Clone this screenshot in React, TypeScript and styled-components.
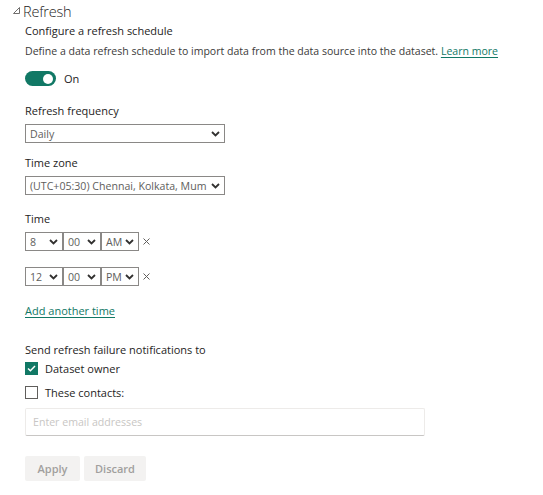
import React from 'react'
import styled, { createGlobalStyle } from 'styled-components'

const GlobalStyle = createGlobalStyle`
  html, body {
    margin: 0;
    padding: 0;
    background: #ffffff;
  }
  body {
    font-family: 'Open Sans', 'Liberation Sans', sans-serif;
    color: #252423;
  }
`

const Page = styled.div`
  padding: 0 0 0 25px;
  width: 518px;
  height: 495px;
  box-sizing: border-box;
`

const Header = styled.div`
  display: flex;
  align-items: center;
  height: 22px;
  margin-left: -12px;
`

const Caret = styled.svg`
  width: 7px;
  height: 7px;
  margin-right: 3px;
  margin-top: -2px;
`

const Title = styled.span`
  font-size: 14.5px;
  font-weight: 300;
  color: #252423;
  letter-spacing: -0.2px;
`

const Block = styled.div<{ $top: number }>`
  margin-top: ${(p) => p.$top}px;
`

const Heading = styled.div`
  font-size: 11px;
  line-height: 14px;
  color: #252423;
`

const Description = styled.div`
  font-size: 10.55px;
  line-height: 14px;
  color: #3b3a39;
  white-space: nowrap;
`

const Link = styled.a`
  color: #117865;
  text-decoration: underline;
  text-underline-offset: 2px;
  cursor: pointer;
`

const ToggleRow = styled.div`
  display: flex;
  align-items: center;
  gap: 8px;
  height: 15px;
`

const Track = styled.div<{ $on: boolean }>`
  width: 31px;
  height: 15px;
  border-radius: 8px;
  background: ${(p) => (p.$on ? '#117865' : '#ffffff')};
  display: flex;
  align-items: center;
  justify-content: ${(p) => (p.$on ? 'flex-end' : 'flex-start')};
  padding: 0 3px;
  box-sizing: border-box;
`

const Knob = styled.div`
  width: 10px;
  height: 10px;
  border-radius: 50%;
  background: #ffffff;
`

const SmallText = styled.span`
  font-size: 11px;
  color: #252423;
`

const SelectBox = styled.div<{ $width: number }>`
  width: ${(p) => p.$width}px;
  height: 19px;
  box-sizing: border-box;
  border: 1px solid #8a8886;
  display: flex;
  align-items: center;
  justify-content: space-between;
  padding: 0 4px 0 4px;
  background: #ffffff;
  flex-shrink: 0;
`

const SelectText = styled.span`
  font-size: 10.6px;
  color: #605e5c;
  white-space: nowrap;
`

const Chevron = styled.svg`
  width: 9px;
  height: 6px;
  flex-shrink: 0;
  margin-left: 2px;
`

const TimeRow = styled.div`
  display: flex;
  align-items: center;
`

const Remove = styled.svg`
  width: 7px;
  height: 7px;
  margin-left: 4px;
`

const CheckRow = styled.label`
  display: flex;
  align-items: center;
  gap: 7px;
  height: 14px;
`

const Box = styled.span<{ $checked: boolean }>`
  width: 13px;
  height: 13px;
  box-sizing: border-box;
  border: 1px solid ${(p) => (p.$checked ? '#117865' : '#605e5c')};
  background: ${(p) => (p.$checked ? '#117865' : '#ffffff')};
  display: flex;
  align-items: center;
  justify-content: center;
`

const EmailInput = styled.div`
  width: 400px;
  height: 28px;
  box-sizing: border-box;
  border: 1px solid #edebe9;
  border-bottom: 1px solid #c8c6c4;
  border-radius: 2px;
  display: flex;
  align-items: center;
  padding-left: 7px;
  font-size: 10.6px;
  color: #c8c6c4;
`

const Buttons = styled.div`
  display: flex;
  gap: 4px;
`

const Button = styled.button<{ $width: number }>`
  width: ${(p) => p.$width}px;
  height: 25px;
  border: none;
  border-radius: 2px;
  background: #f3f2f1;
  color: #a19f9d;
  font-family: inherit;
  font-size: 11px;
  font-weight: 600;
  padding: 0;
`

const Chev = () => (
  <Chevron viewBox="0 0 9 6">
    <path d="M1 1 L4.5 4.5 L8 1" fill="none" stroke="#323130" strokeWidth="1.8" />
  </Chevron>
)

const Select = ({ value, width }: { value: string; width: number }) => (
  <SelectBox $width={width}>
    <SelectText>{value}</SelectText>
    <Chev />
  </SelectBox>
)

const Cross = () => (
  <Remove viewBox="0 0 7 7">
    <path d="M0.5 0.5 L6.5 6.5 M6.5 0.5 L0.5 6.5" stroke="#605e5c" strokeWidth="1" />
  </Remove>
)

const times = [
  { h: '8', m: '00', p: 'AM' },
  { h: '12', m: '00', p: 'PM' },
]

export default function App() {
  return (
    <>
      <GlobalStyle />
      <Page>
        <Header>
          <Caret viewBox="0 0 7 7">
            <path d="M6.5 0.5 L6.5 6.5 L0.5 6.5 Z" fill="none" stroke="#605e5c" strokeWidth="0.9" />
          </Caret>
          <Title>Refresh</Title>
        </Header>

        <Block $top={2}>
          <Heading>Configure a refresh schedule</Heading>
        </Block>
        <Block $top={6}>
          <Description>
            Define a data refresh schedule to import data from the data source into the dataset.{' '}
            <Link>Learn more</Link>
          </Description>
        </Block>

        <Block $top={13}>
          <ToggleRow>
            <Track $on>
              <Knob />
            </Track>
            <SmallText>On</SmallText>
          </ToggleRow>
        </Block>

        <Block $top={18}>
          <Heading>Refresh frequency</Heading>
        </Block>
        <Block $top={6}>
          <Select value="Daily" width={200} />
        </Block>

        <Block $top={13}>
          <Heading>Time zone</Heading>
        </Block>
        <Block $top={6}>
          <Select value="(UTC+05:30) Chennai, Kolkata, Mum" width={200} />
        </Block>

        <Block $top={17}>
          <Heading>Time</Heading>
        </Block>
        {times.map((t, i) => (
          <Block $top={i === 0 ? 6 : 16} key={i}>
            <TimeRow>
              <Select value={t.h} width={38} />
              <Select value={t.m} width={38} />
              <Select value={t.p} width={38} />
              <Cross />
            </TimeRow>
          </Block>
        ))}

        <Block $top={18}>
          <Heading>
            <Link>Add another time</Link>
          </Heading>
        </Block>

        <Block $top={25}>
          <Heading>Send refresh failure notifications to</Heading>
        </Block>
        <Block $top={4}>
          <CheckRow>
            <Box $checked>
              <svg width="9" height="7" viewBox="0 0 9 7">
                <path d="M1 3.5 L3.4 5.8 L8 1" fill="none" stroke="#ffffff" strokeWidth="1.5" />
              </svg>
            </Box>
            <SmallText>Dataset owner</SmallText>
          </CheckRow>
        </Block>
        <Block $top={10}>
          <CheckRow>
            <Box $checked={false} />
            <SmallText>These contacts:</SmallText>
          </CheckRow>
        </Block>

        <Block $top={9}>
          <EmailInput>Enter email addresses</EmailInput>
        </Block>

        <Block $top={20}>
          <Buttons>
            <Button $width={55}>Apply</Button>
            <Button $width={62}>Discard</Button>
          </Buttons>
        </Block>
      </Page>
    </>
  )
}
